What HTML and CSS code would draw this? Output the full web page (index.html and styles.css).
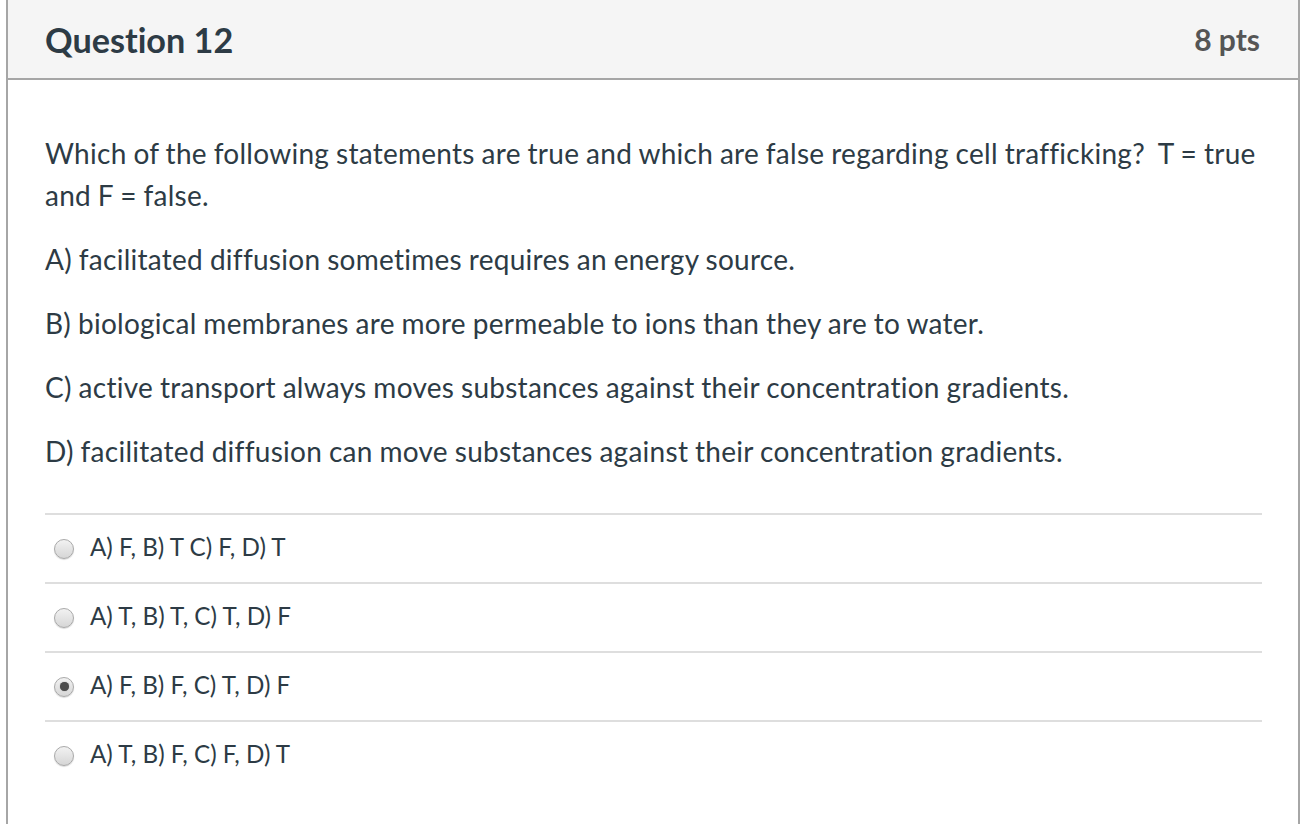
FILE: index.html
```html
<!DOCTYPE html>
<html lang="en">
<head>
<meta charset="utf-8">
<title>Question 12</title>
<link rel="stylesheet" href="styles.css">
</head>
<body>
<div class="question">
  <div class="header">
    <h2 class="name">Question 12</h2>
    <div class="points">8 pts</div>
  </div>
  <div class="content">
    <div class="text">
      <p>Which of the following statements are true and which are false regarding cell trafficking?&nbsp; T = true and F = false.</p>
      <p>A) facilitated diffusion sometimes requires an energy source.</p>
      <p>B) biological membranes are more permeable to ions than they are to water.</p>
      <p>C) active transport always moves substances against their concentration gradients.</p>
      <p>D) facilitated diffusion can move substances against their concentration gradients.</p>
    </div>
    <div class="answers">
      <label class="answer"><span class="radio"></span><span class="label">A) F, B) T C) F, D) T</span></label>
      <label class="answer"><span class="radio"></span><span class="label">A) T, B) T, C) T, D) F</span></label>
      <label class="answer"><span class="radio checked"></span><span class="label">A) F, B) F, C) T, D) F</span></label>
      <label class="answer"><span class="radio"></span><span class="label">A) T, B) F, C) F, D) T</span></label>
    </div>
  </div>
</div>
</body>
</html>
```
FILE: styles.css
```css
html, body {
  margin: 0;
  padding: 0;
  background: #fff;
}
body {
  font-family: Lato, "Open Sans", sans-serif;
  color: #2d3b45;
  height: 824px;
  overflow: hidden;
  font-variant-ligatures: none;
}
.question {
  margin-left: 6px;
  width: 1290px;
  border-left: 2px solid #a6a6a6;
  border-right: 2px solid #a6a6a6;
  min-height: 824px;
}
.header {
  height: 78px;
  background: #f5f5f5;
  border-bottom: 2px solid #a6a6a6;
  display: flex;
  align-items: center;
  justify-content: space-between;
  padding: 0 38px 0 37px;
}
.name {
  margin: 0;
  font-size: 34.2px;
  font-weight: 700;
  color: #2d3b45;
}
.points {
  font-size: 30px;
  font-weight: 700;
  color: #555;
}
.content {
  padding: 52px 36px 0 37px;
}
.text {
  margin-right: -24px;
}
.text p {
  margin: 0 0 22px;
  font-size: 28px;
  line-height: 42px;
  letter-spacing: 0.27px;
  word-spacing: -0.6px;
}
.text p:last-child {
  margin-bottom: 0;
}
.answers {
  margin-top: 41px;
}
.answer {
  display: flex;
  align-items: center;
  height: 67px;
  border-top: 2px solid #dedede;
  padding-left: 9px;
}
.radio {
  width: 18px;
  height: 18px;
  border-radius: 50%;
  border: 1px solid #a9a9a9;
  background: linear-gradient(#f2f2f2, #d6d6d6);
  box-shadow: 0 1px 1px rgba(0,0,0,0.15);
  flex: none;
  margin-right: 16px;
  position: relative;
}
.radio.checked::after {
  content: "";
  position: absolute;
  left: 4.5px;
  top: 4.5px;
  width: 9px;
  height: 9px;
  border-radius: 50%;
  background: #4d4d4d;
  box-shadow: 0 0 1px #777;
}
.label {
  font-size: 24.2px;
  line-height: 30px;
  position: relative;
  top: -2px;
}
```
